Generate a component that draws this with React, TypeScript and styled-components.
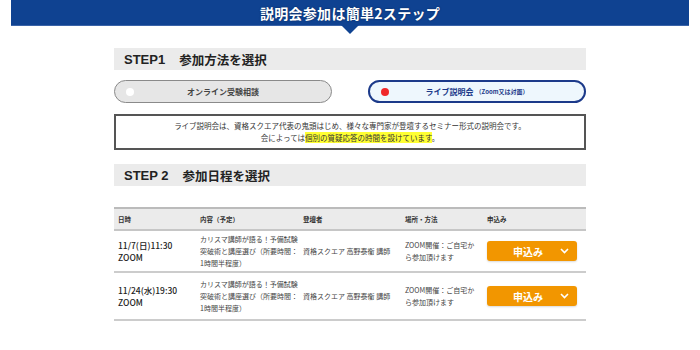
import styled, { createGlobalStyle } from 'styled-components';

const GlobalStyle = createGlobalStyle`
  body {
    margin: 0;
    background: #fff;
    font-family: "Noto Sans CJK JP", "Liberation Sans", sans-serif;
    color: #333;
  }
`;

const Banner = styled.div`
  position: relative;
  margin: 0 11px;
  height: 25px;
  background: #0f4291;
  border-bottom: 1px solid #3a63a8;
  color: #fff;
  font-size: 14px;
  font-weight: 700;
  display: flex;
  align-items: center;
  justify-content: center;
  letter-spacing: 0.3px;
  text-shadow: 0 0 2px rgba(0, 0, 0, 0.4);

  &::after {
    content: '';
    position: absolute;
    left: 50%;
    bottom: -9px;
    margin-left: -9px;
    border-left: 9px solid transparent;
    border-right: 9px solid transparent;
    border-top: 9px solid #0f4291;
  }
`;

const Main = styled.div`
  width: 472px;
  margin: 22px auto 0;
`;

const StepTitle = styled.div<{ $top?: number }>`
  margin-top: ${(p) => p.$top ?? 0}px;
  height: 22px;
  background: #ebebeb;
  display: flex;
  align-items: center;
  padding-left: 10px;
  gap: 14px;
  font-size: 12.5px;
  font-weight: 700;
  color: #222;

  .step {
    font-family: "Liberation Sans", sans-serif;
    font-size: 13px;
  }
`;

const Choices = styled.div`
  display: flex;
  justify-content: space-between;
  margin-top: 10px;
`;

const Choice = styled.div<{ $active?: boolean }>`
  position: relative;
  width: 218px;
  height: 23px;
  box-sizing: border-box;
  border-radius: 12px;
  border: ${(p) => (p.$active ? '2px solid #1c3a8a' : '1.5px solid #8a8a8a')};
  background: ${(p) => (p.$active ? '#eef7fd' : '#e6e6e6')};
  display: flex;
  align-items: center;
  justify-content: center;
  font-size: 8px;
  font-weight: 700;
  color: ${(p) => (p.$active ? '#1c3a8a' : '#444')};

  small {
    font-size: 6px;
    margin-left: 2px;
  }
`;

const Dot = styled.span<{ $red?: boolean }>`
  position: absolute;
  left: 11px;
  top: 50%;
  margin-top: -4px;
  width: 8px;
  height: 8px;
  border-radius: 50%;
  background: ${(p) => (p.$red ? '#f0282a' : '#fff')};
`;

const Notice = styled.div`
  margin-top: 11px;
  border: 2px solid #555;
  padding: 4px 0 5px;
  text-align: center;
  font-size: 7.5px;
  line-height: 11.5px;
  color: #333;

  mark {
    background: #ffff33;
    color: #333;
  }
`;

const Table = styled.div`
  margin-top: 21px;
  border-top: 2px solid #bbb;
`;

const Row = styled.div<{ $head?: boolean }>`
  display: grid;
  grid-template-columns: 82px 103px 102px 82px 99px;
  align-items: center;
  padding-left: 4px;
  height: ${(p) => (p.$head ? 20 : 40)}px;
  background: ${(p) => (p.$head ? '#ebebeb' : '#fff')};
  border-bottom: 2px solid ${(p) => (p.$head ? '#c6c6c6' : '#ccc')};
  font-size: ${(p) => (p.$head ? 6.5 : 7)}px;
  font-weight: ${(p) => (p.$head ? 700 : 400)};
  color: #333;

  &:last-child {
    height: 46px;
  }
`;

const DateCell = styled.div`
  font-size: 8.5px;
  line-height: 12px;
  font-weight: 500;
  color: #222;
`;

const Small = styled.div`
  line-height: 12px;
  color: #444;
`;

const Apply = styled.button`
  width: 90px;
  height: 20px;
  border: none;
  border-radius: 3px;
  background: #f29600;
  box-shadow: 0 1px 2px rgba(0, 0, 0, 0.15);
  color: #fff;
  font-family: inherit;
  font-size: 10px;
  font-weight: 700;
  display: flex;
  align-items: center;
  justify-content: space-between;
  padding: 0 8px 0 26px;
`;

const rows = [
  { date: '11/7(日)11:30' },
  { date: '11/24(水)19:30' },
];

function Chevron() {
  return (
    <svg width="9" height="6" viewBox="0 0 9 6">
      <path d="M1 1l3.5 3.5L8 1" fill="none" stroke="#fff" strokeWidth="1.6" />
    </svg>
  );
}

export default function App() {
  return (
    <>
      <GlobalStyle />
      <Banner>説明会参加は簡単2ステップ</Banner>
      <Main>
        <StepTitle>
          <span className="step">STEP1</span>
          <span>参加方法を選択</span>
        </StepTitle>
        <Choices>
          <Choice>
            <Dot />
            オンライン受験相談
          </Choice>
          <Choice $active>
            <Dot $red />
            ライブ説明会<small>（Zoom又は対面）</small>
          </Choice>
        </Choices>
        <Notice>
          ライブ説明会は、資格スクエア代表の鬼頭はじめ、様々な専門家が登壇するセミナー形式の説明会です。
          <br />
          会によっては<mark>個別の質疑応答の時間を設けています</mark>。
        </Notice>
        <StepTitle $top={14}>
          <span className="step">STEP 2</span>
          <span>参加日程を選択</span>
        </StepTitle>
        <Table>
          <Row $head>
            <div>日時</div>
            <div>内容（予定）</div>
            <div>登壇者</div>
            <div>場所・方法</div>
            <div>申込み</div>
          </Row>
          {rows.map((r) => (
            <Row key={r.date}>
              <DateCell>
                {r.date}
                <br />
                ZOOM
              </DateCell>
              <Small>
                カリスマ講師が語る！予備試験
                <br />
                突破術と講座選び（所要時間：
                <br />
                1時間半程度）
              </Small>
              <Small>資格スクエア 高野泰衡 講師</Small>
              <Small>
                ZOOM開催：ご自宅か
                <br />
                ら参加頂けます
              </Small>
              <Apply>
                申込み
                <Chevron />
              </Apply>
            </Row>
          ))}
        </Table>
      </Main>
    </>
  );
}
